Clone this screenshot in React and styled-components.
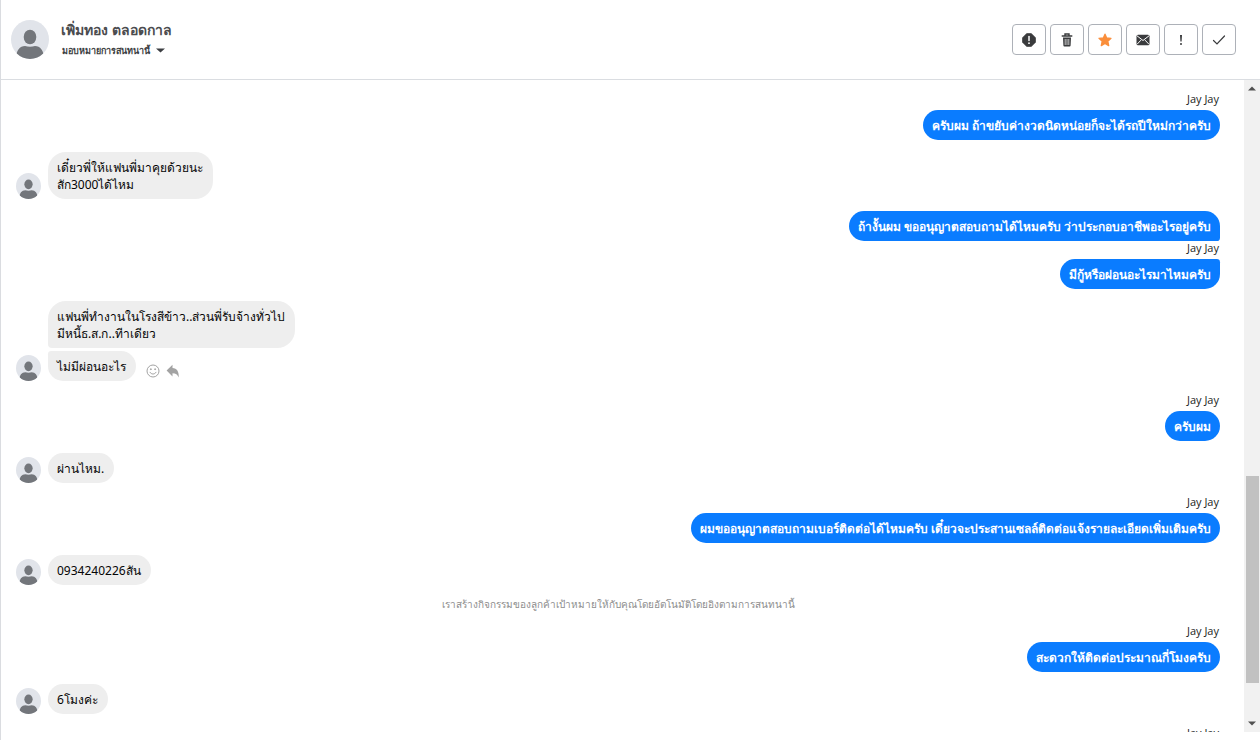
import React from 'react';
import styled, { createGlobalStyle } from 'styled-components';

const GlobalStyle = createGlobalStyle`
  * {
    box-sizing: border-box;
  }

  body {
    margin: 0;
    background: #ffffff;
    font-family: 'Noto Sans', 'Open Sans', sans-serif;
    font-size: 12px;
    color: #050505;
  }

  button {
    font-family: inherit;
    cursor: pointer;
  }
`;

const Page = styled.div`
  display: flex;
  flex-direction: column;
  height: 100vh;
  padding-bottom: 8px;
  border-left: 1px solid #dadce0;
  overflow: hidden;
`;

const Header = styled.header`
  flex: none;
  display: flex;
  align-items: center;
  justify-content: space-between;
  height: 80px;
  padding: 0 24px 0 10px;
  border-bottom: 1px solid #dadde1;
`;

const Contact = styled.div`
  display: flex;
  align-items: center;
  gap: 12px;
`;

const ContactText = styled.div`
  padding-top: 2px;
`;

const ContactName = styled.h1`
  margin: 0;
  font-size: 14px;
  font-weight: 600;
  line-height: 20px;
  color: #4b4c4f;
`;

const AssignButton = styled.button`
  display: flex;
  align-items: center;
  gap: 6px;
  padding: 0 1px;
  border: 0;
  background: none;
  font-size: 9px;
  font-weight: 700;
  line-height: 22px;
  color: #3c3e42;
`;

const Toolbar = styled.div`
  display: flex;
  gap: 4px;
`;

const ToolButton = styled.button`
  display: flex;
  align-items: center;
  justify-content: center;
  width: 34px;
  height: 31px;
  padding: 0;
  border: 1px solid #adb1b8;
  border-radius: 4px;
  background: #ffffff;
  color: ${({ $color }) => $color || '#3a3b3d'};
`;

const Body = styled.div`
  flex: 1;
  min-height: 0;
  display: flex;
`;

const Thread = styled.main`
  flex: 1;
  min-width: 0;
  display: flex;
  flex-direction: column;
  gap: 12px;
  padding: 12px 24px 0 15px;
  overflow: hidden;
`;

const Row = styled.section`
  flex: none;
  display: flex;
  align-items: flex-end;
  gap: 7px;
`;

const Stack = styled.div`
  display: flex;
  flex-direction: column;
  align-items: ${({ $own }) => ($own ? 'flex-end' : 'flex-start')};
  gap: ${({ $own }) => ($own ? '0' : '3px')};
  flex: ${({ $own }) => ($own ? '1' : 'none')};
`;

const Sender = styled.div`
  height: 18px;
  padding-right: 1px;
  font-family: 'Open Sans', 'Noto Sans', sans-serif;
  font-size: 11px;
  line-height: 14px;
  color: #1c1e21;
`;

const Bubble = styled.p`
  margin: 0;
  padding: ${({ $own }) => ($own ? '7px 9px 6px' : '7px 10px 6px 9px')};
  border-radius: 18px;
  line-height: 17px;
  white-space: pre-line;
  background: ${({ $own }) => ($own ? '#0a7cff' : '#eeeeee')};
  color: ${({ $own }) => ($own ? '#ffffff' : '#050505')};
  font-weight: ${({ $own }) => ($own ? 600 : 400)};
  ${({ $own, $joinTop }) => $joinTop && `border-top-${$own ? 'right' : 'left'}-radius: 4px;`}
  ${({ $own, $joinBottom }) => $joinBottom && `border-bottom-${$own ? 'right' : 'left'}-radius: 4px;`}
`;

const BubbleLine = styled.div`
  display: flex;
  align-items: center;
  gap: 10px;
`;

const BubbleActions = styled.div`
  display: flex;
  gap: 6px;
  padding-top: 10px;
`;

const ActionButton = styled.button`
  display: flex;
  padding: 0;
  border: 0;
  background: none;
  color: #a3a3a3;
`;

const Notice = styled.p`
  flex: none;
  margin: 0;
  font-size: 10px;
  line-height: 15px;
  text-align: center;
  color: #8d8d8d;
`;

const Scrollbar = styled.div`
  flex: none;
  display: flex;
  flex-direction: column;
  width: 16px;
  background: #f1f1f1;
`;

const ScrollButton = styled.button`
  display: flex;
  align-items: center;
  justify-content: center;
  height: 17px;
  padding: 0;
  border: 0;
  background: none;
  color: #505050;
`;

const ScrollTrack = styled.div`
  flex: 1;
  display: grid;
  grid-template-rows: 379fr 207fr 32fr;
  padding: 0 1px 0 2px;
`;

const ScrollThumb = styled.div`
  grid-row: 2;
  background: #c1c1c1;
`;

const AvatarImage = styled.svg`
  flex: none;
  border-radius: 50%;
`;

function Avatar({ width, height }) {
  return (
    <AvatarImage width={width} height={height} viewBox="0 0 38 39" preserveAspectRatio="none" aria-hidden="true">
      <rect width="38" height="39" fill="#e1e4ea" />
      <ellipse cx="19" cy="17" rx="6.300" ry="7.300" fill="#73767b" />
      <path d="M5 39c0-9 4-13 9-13 3 1 7 1 10 0 5 0 9 4 9 13z" fill="#73767b" />
    </AvatarImage>
  );
}

function AlertIcon() {
  return (
    <svg width="14" height="14" viewBox="0 0 14 14">
      <path d="M4.800 .8h4.400l4 4v4.400l-4 4H4.800l-4-4V4.800z" fill="currentColor" stroke="currentColor" strokeWidth="1.200" strokeLinejoin="round" />
      <path d="M7 3.600v4" stroke="#fff" strokeWidth="1.500" strokeLinecap="round" />
      <circle cx="7" cy="10.200" r="0.900" fill="#fff" />
    </svg>
  );
}

function TrashIcon() {
  return (
    <svg width="12" height="14" viewBox="0 0 12 14">
      <path d="M1.200 3h9.600M4 2.500V1h4v1.500" fill="none" stroke="currentColor" strokeWidth="1.400" strokeLinecap="round" />
      <path d="M2 4.600h8l-.4 8a1 1 0 0 1-1 .9H3.400a1 1 0 0 1-1-.9z" fill="currentColor" />
      <path d="M4.200 6v6M6 6v6M7.800 6v6" stroke="#fff" strokeWidth="0.700" />
    </svg>
  );
}

function StarIcon() {
  return (
    <svg width="14" height="14" viewBox="0 0 14 14">
      <path
        d="M7 1.200l1.700 3.700 4.300.4-3.200 2.900.9 4.400L7 10.400l-3.700 2.200.9-4.400L1 5.300l4.300-.4z"
        fill="currentColor"
        stroke="currentColor"
        strokeWidth="1.300"
        strokeLinejoin="round"
      />
    </svg>
  );
}

function MailIcon() {
  return (
    <svg width="14" height="12" viewBox="0 0 14 12">
      <rect x="0.500" y="0.800" width="13" height="10.400" rx="1.500" fill="currentColor" />
      <path d="M1 1.800l6 4.700 6-4.700M1 10.300l4-4.200M13 10.300L9 6.100" fill="none" stroke="#fff" strokeWidth="1" />
    </svg>
  );
}

function ExclamationIcon() {
  return (
    <svg width="4" height="12" viewBox="0 0 4 12">
      <path d="M1 1h2l-.4 6.500H1.400z" fill="currentColor" />
      <circle cx="2" cy="10" r="1" fill="currentColor" />
    </svg>
  );
}

function CheckIcon() {
  return (
    <svg width="14" height="12" viewBox="0 0 14 12">
      <path d="M1.500 6.500l3.500 3.500L12.500 2" fill="none" stroke="currentColor" strokeWidth="1.200" strokeLinecap="round" />
    </svg>
  );
}

function SmileIcon() {
  return (
    <svg width="14" height="14" viewBox="0 0 14 14" fill="none" stroke="currentColor">
      <circle cx="7" cy="7" r="6" />
      <path d="M4 8.300c1.200 2.400 4.800 2.400 6 0" strokeLinecap="round" />
      <circle cx="4.900" cy="5.200" r="0.500" fill="currentColor" />
      <circle cx="9.100" cy="5.200" r="0.500" fill="currentColor" />
    </svg>
  );
}

function ReplyIcon() {
  return (
    <svg width="14" height="14" viewBox="0 0 14 14">
      <path d="M6.500 .8v3.200c4.500 0 6.500 3.500 6.300 9.600-1.200-3-3-4.400-6.300-4.400V12.400L.6 6.600z" fill="currentColor" />
    </svg>
  );
}

function Caret({ up, width = 8 }) {
  return (
    <svg width={width} height="5" viewBox="0 0 8 5" preserveAspectRatio="none" aria-hidden="true">
      <path d={up ? 'M0 4.500L4 .5l4 4z' : 'M0 .5l4 4 4-4z'} fill="currentColor" />
    </svg>
  );
}

const tools = [
  { label: 'Report', icon: <AlertIcon /> },
  { label: 'Delete', icon: <TrashIcon /> },
  { label: 'Star', icon: <StarIcon />, color: '#fa8e3b' },
  { label: 'Mark as unread', icon: <MailIcon /> },
  { label: 'Follow up', icon: <ExclamationIcon /> },
  { label: 'Done', icon: <CheckIcon /> },
];

const messages = [
  { own: true, items: [{ sender: 'Jay Jay', text: 'ครับผม ถ้าขยับค่างวดนิดหน่อยก็จะได้รถปีใหม่กว่าครับ' }] },
  { items: [{ text: 'เดี๋ยวพี่ให้แฟนพี่มาคุยด้วยนะ\nสัก3000ได้ไหม' }] },
  {
    own: true,
    items: [
      { text: 'ถ้างั้นผม ขออนุญาตสอบถามได้ไหมครับ ว่าประกอบอาชีพอะไรอยู่ครับ' },
      { sender: 'Jay Jay', text: 'มีกู้หรือผ่อนอะไรมาไหมครับ' },
    ],
  },
  {
    items: [
      { text: 'แฟนพี่ทำงานในโรงสีข้าว..ส่วนพี่รับจ้างทั่วไป\nมีหนี้ธ.ส.ก..ทีาเดียว' },
      { text: 'ไม่มีผ่อนอะไร', actions: true },
    ],
  },
  { own: true, items: [{ sender: 'Jay Jay', text: 'ครับผม' }] },
  { items: [{ text: 'ผ่านไหม.' }] },
  {
    own: true,
    items: [
      {
        sender: 'Jay Jay',
        text: 'ผมขออนุญาตสอบถามเบอร์ติดต่อได้ไหมครับ เดี๋ยวจะประสานเซลล์ติดต่อแจ้งรายละเอียดเพิ่มเติมครับ',
      },
    ],
  },
  { items: [{ text: '0934240226สัน' }] },
  { notice: 'เราสร้างกิจกรรมของลูกค้าเป้าหมายให้กับคุณโดยอัตโนมัติโดยอิงตามการสนทนานี้' },
  { own: true, items: [{ sender: 'Jay Jay', text: 'สะดวกให้ติดต่อประมาณกี่โมงครับ' }] },
  { items: [{ text: '6โมงค่ะ' }] },
  { own: true, items: [{ sender: 'Jay Jay' }] },
];

function MessageGroup({ own, items }) {
  return (
    <Row>
      {!own && <Avatar width={25} height={26} />}
      <Stack $own={own}>
        {items.map((item, i) => (
          <React.Fragment key={i}>
            {item.sender && <Sender>{item.sender}</Sender>}
            {item.text && (
              <BubbleLine>
                <Bubble $own={own} $joinTop={i > 0} $joinBottom={i < items.length - 1}>
                  {item.text}
                </Bubble>
                {item.actions && (
                  <BubbleActions>
                    <ActionButton aria-label="React">
                      <SmileIcon />
                    </ActionButton>
                    <ActionButton aria-label="Reply">
                      <ReplyIcon />
                    </ActionButton>
                  </BubbleActions>
                )}
              </BubbleLine>
            )}
          </React.Fragment>
        ))}
      </Stack>
    </Row>
  );
}

export default function App() {
  return (
    <>
      <GlobalStyle />
      <Page>
        <Header>
          <Contact>
            <Avatar width={38} height={39} />
            <ContactText>
              <ContactName>เพิ่มทอง ตลอดกาล</ContactName>
              <AssignButton>
                มอบหมายการสนทนานี้
                <Caret width={9} />
              </AssignButton>
            </ContactText>
          </Contact>
          <Toolbar>
            {tools.map((tool) => (
              <ToolButton key={tool.label} aria-label={tool.label} $color={tool.color}>
                {tool.icon}
              </ToolButton>
            ))}
          </Toolbar>
        </Header>
        <Body>
          <Thread>
            {messages.map((message, i) =>
              message.notice ? (
                <Notice key={i}>{message.notice}</Notice>
              ) : (
                <MessageGroup key={i} own={message.own} items={message.items} />
              )
            )}
          </Thread>
          <Scrollbar>
            <ScrollButton aria-label="Scroll up">
              <Caret up />
            </ScrollButton>
            <ScrollTrack>
              <ScrollThumb />
            </ScrollTrack>
            <ScrollButton aria-label="Scroll down">
              <Caret />
            </ScrollButton>
          </Scrollbar>
        </Body>
      </Page>
    </>
  );
}
